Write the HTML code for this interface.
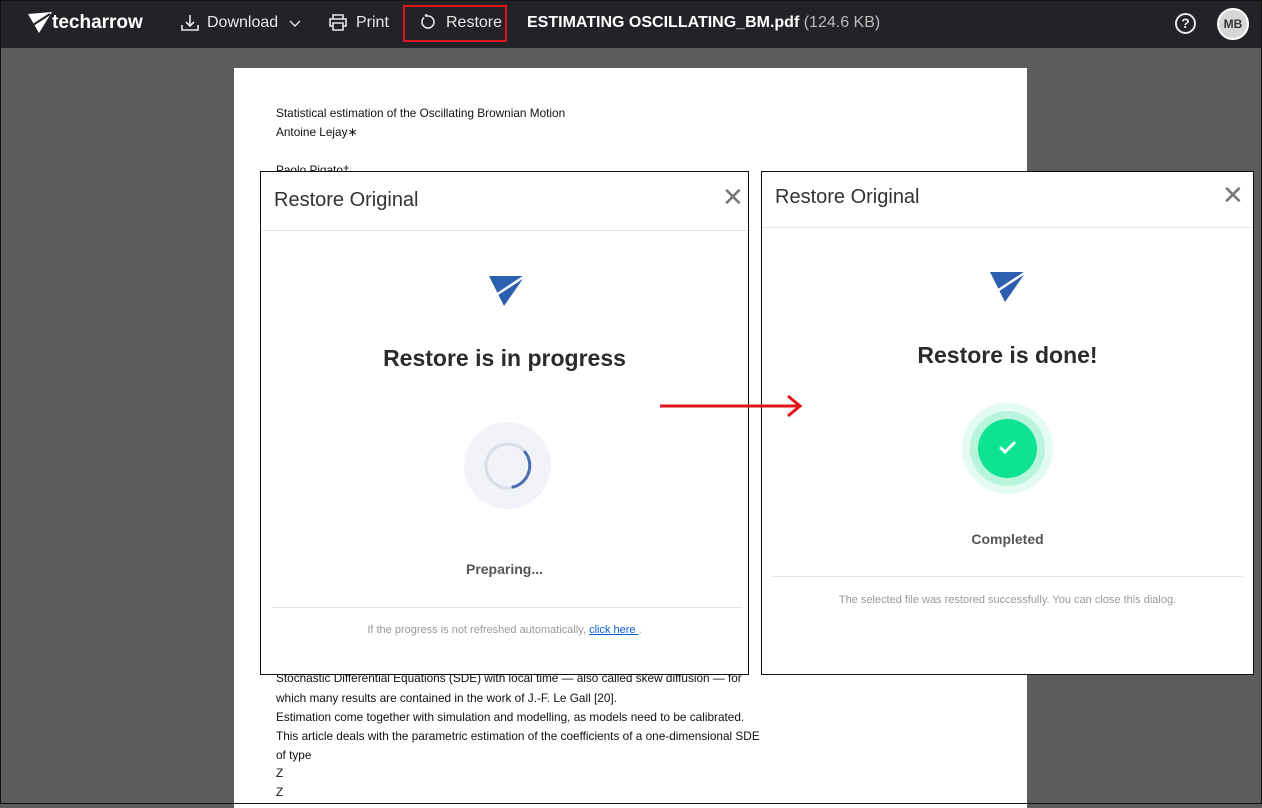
<!DOCTYPE html>
<html><head><style>
*{margin:0;padding:0;box-sizing:border-box}
body{width:1262px;height:804px;overflow:hidden;background:#5c5c5c;font-family:"Liberation Sans",sans-serif;position:relative}
.frame{position:absolute;left:0;top:0;width:1262px;height:804px;border:1px solid #111;z-index:9;pointer-events:none}
.top{position:absolute;left:0;top:0;width:1262px;height:48px;background:#212327;color:#e8e8e8;font-size:16px}
.top span{position:absolute;top:14px}
.page{position:absolute;left:234px;top:68px;width:793px;height:740px;background:#fff}
.page p{position:absolute;left:42px;font-size:11.8px;color:#111;white-space:nowrap}
.dlg{position:absolute;background:#fff;border:1px solid #111}
.dlg .t{position:absolute;left:13px;font-size:20px;color:#333}
.dlg .x{position:absolute;font-size:26px;color:#777;font-weight:300}
.hr{position:absolute;height:1px;background:#e5e5e5}
.h{position:absolute;left:0;width:100%;text-align:center;font-size:23px;font-weight:bold;color:#2b2b2b}
.c{position:absolute;left:0;width:100%;text-align:center}
</style></head><body>
<div class="frame"></div>
<div class="top">
<svg style="position:absolute;left:28px;top:12px" width="24" height="22" viewBox="0 0 24 22"><path d="M0 2L24 0L11 21Z" fill="#fff"/><path d="M5 13L22 2" stroke="#212327" stroke-width="2"/></svg>
<span style="left:52px;top:12px;font-size:19px;font-weight:bold;color:#fff">techarrow</span>
<svg style="position:absolute;left:181px;top:14px" width="18" height="18" viewBox="0 0 18 18" fill="none" stroke="#e8e8e8" stroke-width="1.6"><path d="M9 1v11M5 8l4 4 4-4M1 11v5h16v-5"/></svg>
<span style="left:207px">Download</span>
<svg style="position:absolute;left:289px;top:20px" width="12" height="8" viewBox="0 0 12 8" fill="none" stroke="#e8e8e8" stroke-width="1.4"><path d="M1 1l5 5 5-5"/></svg>
<svg style="position:absolute;left:329px;top:14px" width="18" height="17" viewBox="0 0 18 17" fill="none" stroke="#e8e8e8" stroke-width="1.6"><path d="M4 5V1h10v4M4 12H1V5h16v7h-3M4 9h10v7H4z"/></svg>
<span style="left:356px">Print</span>
<div style="position:absolute;left:403px;top:5px;width:104px;height:37px;border:2px solid #e0141c"></div>
<svg style="position:absolute;left:420px;top:14px" width="16" height="16" viewBox="0 0 16 16" fill="none" stroke="#e8e8e8" stroke-width="1.6"><path d="M4 3.5A6 6 0 1 0 8 2H5M5 2l2-2"/></svg>
<span style="left:446px">Restore</span>
<span style="left:527px;font-weight:bold;color:#fff">ESTIMATING OSCILLATING_BM.pdf <span style="position:static;font-weight:normal;color:#bbb">(124.6 KB)</span></span>
<div style="position:absolute;left:1175px;top:13px;width:21px;height:21px;border:2px solid #e8e8e8;border-radius:50%;text-align:center;font-size:14px;font-weight:bold;line-height:17px">?</div>
<div style="position:absolute;left:1217px;top:8px;width:32px;height:32px;border-radius:50%;background:#d6d6d6;border:2px solid #fff;color:#333;font-size:12px;font-weight:bold;text-align:center;line-height:28px">MB</div>
</div>
<div class="page">
<p style="top:38px">Statistical estimation of the Oscillating Brownian Motion</p>
<p style="top:57px">Antoine Lejay∗</p>
<p style="top:95px">Paolo Pigato†</p>
<p style="top:397px;left:527px">si</p>
<p style="top:567px;left:527px">oth</p>
<p style="top:587px;left:527px">of</p>
<p style="top:603px">Stochastic Differential Equations (SDE) with local time — also called skew diffusion — for</p>
<p style="top:623px">which many results are contained in the work of J.-F. Le Gall [20].</p>
<p style="top:642px">Estimation come together with simulation and modelling, as models need to be calibrated.</p>
<p style="top:661px">This article deals with the parametric estimation of the coefficients of a one-dimensional SDE</p>
<p style="top:680px">of type</p>
<p style="top:698px">Z</p>
<p style="top:717px">Z</p>
</div>
<div class="dlg" style="left:260px;top:171px;width:489px;height:504px">
<div class="t" style="top:17px">Restore Original</div>
<div class="x" style="left:461px;top:10px">✕</div>
<div class="hr" style="left:0;top:58px;width:487px"></div>
<svg style="position:absolute;left:228px;top:104px" width="36" height="30" viewBox="0 0 36 30"><path d="M0 0H36L15 30Z" fill="#2d5fb0"/><path d="M4 21L36 0" stroke="#fff" stroke-width="2.5"/></svg>
<div class="h" style="top:173px">Restore is in progress</div>
<div style="position:absolute;left:203px;top:250px;width:87px;height:87px;border-radius:50%;background:#f1f3f8"></div>
<svg style="position:absolute;left:222px;top:269px" width="50" height="50" viewBox="0 0 50 50" fill="none" stroke-width="3"><circle cx="25" cy="25" r="22" stroke="#d9dee9"/><path d="M42 11A22 22 0 0 1 30 46" stroke="#4d6db3" stroke-linecap="round"/></svg>
<div class="c" style="top:389px;font-size:14px;font-weight:bold;color:#555">Preparing...</div>
<div class="hr" style="left:11px;top:435px;width:470px"></div>
<div class="c" style="top:452px;font-size:11px;color:#999">If the progress is not refreshed automatically, <span style="color:#0b5ed7;text-decoration:underline">click here </span>.</div>
</div>
<div class="dlg" style="left:761px;top:171px;width:493px;height:504px">
<div class="t" style="top:14px">Restore Original</div>
<div class="x" style="left:460px;top:8px">✕</div>
<div class="hr" style="left:0;top:55px;width:491px"></div>
<svg style="position:absolute;left:228px;top:100px" width="36" height="30" viewBox="0 0 36 30"><path d="M0 0H36L15 30Z" fill="#2d5fb0"/><path d="M4 21L36 0" stroke="#fff" stroke-width="2.5"/></svg>
<div class="h" style="top:170px">Restore is done!</div>
<div style="position:absolute;left:200px;top:231px;width:91px;height:91px;border-radius:50%;background:#e4fbf3"></div>
<div style="position:absolute;left:208px;top:239px;width:75px;height:75px;border-radius:50%;background:#b8f4dc"></div>
<div style="position:absolute;left:216px;top:247px;width:59px;height:59px;border-radius:50%;background:#0de391"></div>
<svg style="position:absolute;left:236px;top:268px" width="20" height="16" viewBox="0 0 20 16" fill="none" stroke="#fff" stroke-width="3" stroke-linecap="round"><path d="M3 8l4 4 9-9"/></svg>
<div class="c" style="top:359px;font-size:14px;font-weight:bold;color:#555">Completed</div>
<div class="hr" style="left:10px;top:404px;width:471px"></div>
<div class="c" style="top:422px;font-size:11px;color:#999">The selected file was restored successfully. You can close this dialog.</div>
</div>
<svg style="position:absolute;left:658px;top:394px" width="148" height="26" viewBox="0 0 148 26" fill="none" stroke="#e0141c" stroke-width="3"><path d="M2 12H142M130 2l12 10-12 10"/></svg>
</body></html>
